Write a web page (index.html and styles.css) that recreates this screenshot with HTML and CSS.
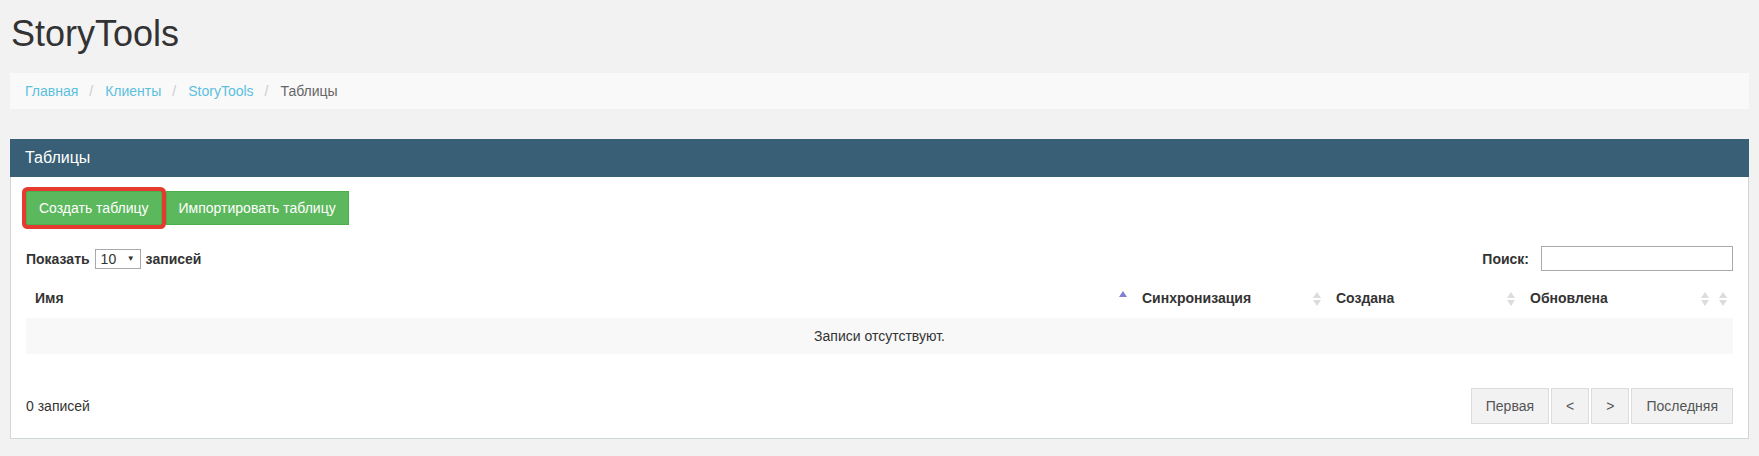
FILE: index.html
```html
<!DOCTYPE html>
<html lang="ru">
<head>
<meta charset="utf-8">
<title>StoryTools — Таблицы</title>
<link rel="stylesheet" href="styles.css">
</head>
<body>
<div class="page">
  <h1 class="title">StoryTools</h1>
  <ol class="breadcrumb">
    <li><a href="#">Главная</a></li>
    <li class="sep">/</li>
    <li><a href="#">Клиенты</a></li>
    <li class="sep">/</li>
    <li><a href="#">StoryTools</a></li>
    <li class="sep">/</li>
    <li class="active">Таблицы</li>
  </ol>
  <div class="panel">
    <div class="panel-heading">Таблицы</div>
    <div class="panel-body">
      <div class="actions">
        <button class="btn btn-success btn-highlight">Создать таблицу</button>
        <button class="btn btn-success">Импортировать таблицу</button>
      </div>
      <div class="dt-top">
        <div class="dt-length">Показать <span class="select"><span>10</span><span class="caret">▼</span></span> записей</div>
        <label class="dt-filter">Поиск: <input class="search" type="text"></label>
      </div>
      <table class="dt">
        <colgroup>
          <col class="c-name">
          <col class="c-mid">
          <col class="c-mid">
          <col class="c-mid">
          <col class="c-last">
        </colgroup>
        <thead>
          <tr>
            <th class="sorting-asc">Имя</th>
            <th class="sorting">Синхронизация</th>
            <th class="sorting">Создана</th>
            <th class="sorting">Обновлена</th>
            <th class="sorting narrow"></th>
          </tr>
        </thead>
        <tbody>
          <tr class="odd"><td class="empty" colspan="5">Записи отсутствуют.</td></tr>
        </tbody>
      </table>
      <div class="dt-bottom">
        <div class="dt-info">0 записей</div>
        <div class="paging">
          <a class="page-btn" href="#">Первая</a>
          <a class="page-btn" href="#">&lt;</a>
          <a class="page-btn" href="#">&gt;</a>
          <a class="page-btn" href="#">Последняя</a>
        </div>
      </div>
    </div>
  </div>
</div>
</body>
</html>
```
FILE: styles.css
```css
* { box-sizing: border-box; }

html, body {
  margin: 0;
  background: #f2f2f2;
  font-family: "Liberation Sans", Arial, sans-serif;
  font-size: 14px;
  line-height: 20px;
  color: #333;
}

.page {
  padding: 0 10px;
}

.title {
  margin: 14px 0 19px 1px;
  font-size: 36px;
  line-height: 40px;
  font-weight: normal;
  color: #333;
}

.breadcrumb {
  display: flex;
  list-style: none;
  margin: 0 0 30px;
  padding: 8px 15px;
  background: #f9f9f9;
}
.breadcrumb li { display: block; }
.breadcrumb a { color: #5bc0de; text-decoration: none; }
.breadcrumb .sep { color: #ccc; padding: 0 12px 0 11px; }
.breadcrumb .active { color: #666; }

.panel-heading {
  background: #385f75;
  color: #fff;
  font-size: 16px;
  line-height: 18px;
  padding: 10px 15px;
}

.panel-body {
  background: #fff;
  border: 1px solid #d0d7db;
  border-top: 0;
  padding: 14px 15px 14px 15px;
}

.actions {
  display: flex;
  gap: 4px;
}

.btn {
  font-family: inherit;
  font-size: 14px;
  line-height: 20px;
  padding: 6px 12px;
  border: 1px solid #4cae4c;
  background: #5cb85c;
  color: #fff;
  border-radius: 0;
  cursor: pointer;
}
.btn-highlight {
  border-radius: 2px;
  box-shadow: 0 0 0 4px #e53a2f;
}

.dt-top {
  display: flex;
  justify-content: space-between;
  align-items: center;
  margin-top: 21px;
  height: 25px;
}
.dt-length, .dt-filter {
  font-weight: bold;
  display: flex;
  align-items: center;
  color: #333;
}
.select {
  display: inline-flex;
  align-items: center;
  justify-content: space-between;
  width: 46px;
  height: 20px;
  margin: 0 5px 0 5px;
  padding: 0 5px 0 5px;
  border: 1px solid #a9a9a9;
  font-weight: normal;
  background: #fff;
}
.select .caret {
  font-size: 8px;
  color: #333;
}
.search {
  width: 192px;
  height: 25px;
  margin-left: 12px;
  border: 1px solid #aaa;
  font-family: inherit;
  font-size: 14px;
  padding: 2px 4px;
}

.dt {
  width: 100%;
  table-layout: fixed;
  border-collapse: collapse;
  margin-top: 7px;
}
.c-name { width: 1107px; }
.c-mid { width: 194px; }
.c-last { width: 18px; }

.dt th {
  position: relative;
  text-align: left;
  font-weight: bold;
  padding: 10px 18px 10px 9px;
  line-height: 20px;
  white-space: nowrap;
  overflow: hidden;
}
.dt th.narrow { padding: 0; }

.dt th.sorting::before,
.dt th.sorting::after,
.dt th.sorting-asc::before {
  content: "";
  position: absolute;
  right: 6px;
  width: 0;
  height: 0;
  border-left: 4px solid transparent;
  border-right: 4px solid transparent;
}
.dt th.sorting::before {
  top: 14px;
  border-bottom: 6px solid #dcdcdc;
}
.dt th.sorting::after {
  top: 22px;
  border-top: 6px solid #dcdcdc;
}
.dt th.sorting-asc::before {
  top: 13px;
  border-bottom: 6px solid #7f7fd8;
}

.dt td {
  padding: 8px 10px;
  line-height: 20px;
}
.dt tr.odd td { background: #f8f8f8; }
.dt td.empty { text-align: center; }

.dt-bottom {
  display: flex;
  justify-content: space-between;
  align-items: center;
  margin-top: 34px;
}
.dt-info { color: #333; }

.paging {
  display: flex;
  gap: 2px;
}
.page-btn {
  display: block;
  height: 36px;
  line-height: 34px;
  padding: 0 14px;
  border: 1px solid #dcdcdc;
  background: #f2f2f2;
  color: #555;
  text-decoration: none;
}
```
